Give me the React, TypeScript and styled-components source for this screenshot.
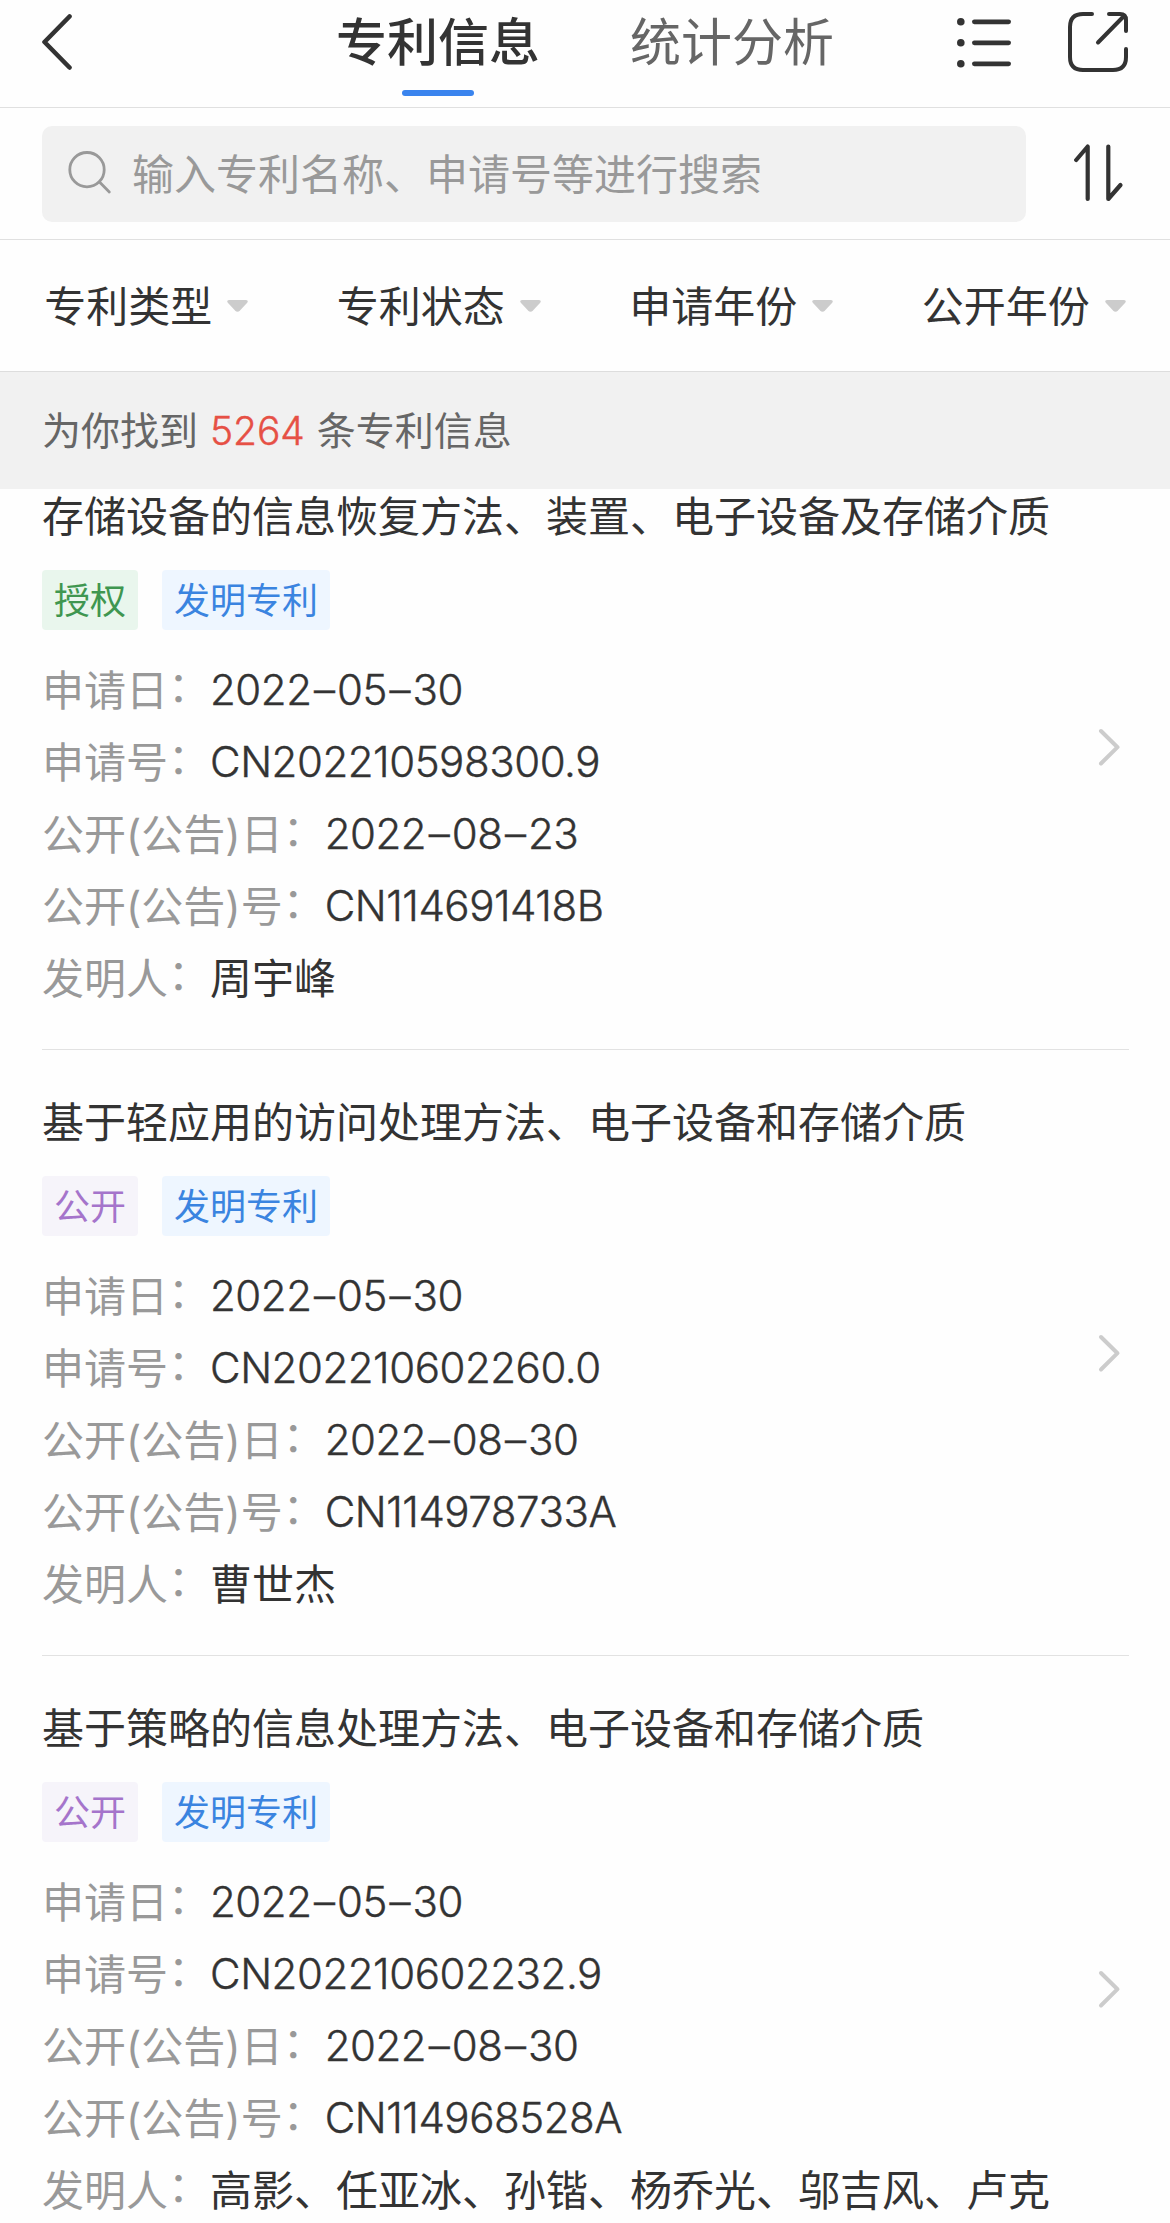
import React from 'react';
import styled, { createGlobalStyle } from 'styled-components';

const GlobalStyle = createGlobalStyle`
  * { box-sizing: border-box; }
  body {
    margin: 0;
    background: #fefefe;
    color: #333;
    font-family: Inter, "Noto Sans CJK SC", sans-serif;
  }
`;

const Screen = styled.div`
  width: 1170px;
  height: 2223px;
  overflow: hidden;
  display: flex;
  flex-direction: column;
  background: #fefefe;
`;

const Header = styled.header`
  flex: none;
  height: 108px;
  padding: 0 42px;
  display: flex;
  align-items: flex-start;
  border-bottom: 1px solid #e0e0e0;
`;

const BackIcon = styled.svg`
  width: 32px;
  height: 60px;
  margin: 12px 262px 0 0;
`;

const Tabs = styled.nav`
  display: flex;
  gap: 90px;
`;

const Tab = styled.div<{ $active?: boolean }>`
  height: 96px;
  display: flex;
  flex-direction: column;
  align-items: center;
  justify-content: space-between;
  font-size: 51px;
  line-height: 86px;
  font-weight: ${(p) => (p.$active ? 500 : 400)};
  color: ${(p) => (p.$active ? '#333' : '#666')};
`;

const TabBar = styled.span`
  width: 72px;
  height: 6px;
  border-radius: 3px;
  background: #3a84ee;
`;

const HeaderActions = styled.div`
  margin: 12px -2px 0 auto;
  display: flex;
  gap: 55px;
`;

const SearchBar = styled.div`
  flex: none;
  height: 132px;
  padding: 1px 46px 0 42px;
  display: flex;
  align-items: center;
  justify-content: space-between;
  border-bottom: 1px solid #e0e0e0;
`;

const SearchField = styled.div`
  width: 984px;
  height: 96px;
  padding-left: 26px;
  display: flex;
  align-items: center;
  gap: 20px;
  border-radius: 10px;
  background: #f1f1f1;
  color: #999;
  font-size: 42px;
  line-height: 60px;
`;

const Placeholder = styled.span`
  padding-top: 2px;
`;

const Filters = styled.div`
  flex: none;
  height: 132px;
  display: grid;
  grid-template-columns: repeat(4, 1fr);
  border-bottom: 1px solid #ddd;
`;

const Filter = styled.div`
  display: flex;
  align-items: center;
  justify-content: center;
  gap: 15px;
  font-size: 42px;
  line-height: 60px;
`;

const FilterName = styled.span`
  padding-top: 3px;
`;

const Summary = styled.div`
  flex: none;
  height: 117px;
  padding-left: 42px;
  font-size: 39px;
  line-height: 117px;
  color: #666;
  background: #f1f1f1;
`;

const Count = styled.span`
  margin: 0 12px;
  color: #e65045;
  font-weight: 300;
  -webkit-text-stroke: 0.4px #e65045;
  letter-spacing: -0.1px;
`;

const Viewport = styled.main`
  flex: 1;
  min-height: 0;
  overflow: hidden;
`;

const List = styled.div`
  margin: -45px 41px 0 42px;
`;

const Card = styled.article`
  padding: 42px 7px 41px 0;
  display: flex;
  align-items: center;
  justify-content: space-between;
  border-bottom: 1px solid #e2e2e2;
`;

const CardBody = styled.div`
  width: 1030px;
`;

const Title = styled.h2`
  margin: 0 0 23px;
  padding-top: 1px;
  font-size: 42px;
  font-weight: 400;
  line-height: 60px;
`;

const Tags = styled.div`
  display: flex;
  gap: 24px;
  margin-bottom: 30px;
`;

const tones = {
  green: { ink: '#3f9650', fill: '#e9f6ed' },
  purple: { ink: '#a574cb', fill: '#f6f4fa' },
  blue: { ink: '#3a84e0', fill: '#eef6ff' },
};

const Tag = styled.span<{ $tone: keyof typeof tones }>`
  height: 60px;
  padding: 0 12px;
  border-radius: 4px;
  font-size: 36px;
  line-height: 62px;
  color: ${(p) => tones[p.$tone].ink};
  background: ${(p) => tones[p.$tone].fill};
`;

const Fields = styled.dl`
  margin: 0;
  display: flex;
  flex-direction: column;
  gap: 12px;
`;

const Field = styled.div<{ $lines: number }>`
  display: flex;
  height: ${(p) => p.$lines * 60}px;
  font-size: 42px;
  line-height: 60px;
`;

const Label = styled.dt`
  flex: none;
  padding-top: 1px;
  color: #999;
`;

const Colon = styled.span`
  line-height: 0;
  vertical-align: 4px;
`;

const Value = styled.dd<{ $latin: boolean }>`
  margin: 0;
  padding-top: ${(p) => (p.$latin ? 0 : 1)}px;
  font-weight: ${(p) => (p.$latin ? 300 : 400)};
  -webkit-text-stroke: ${(p) => (p.$latin ? '0.4px #333' : '0')};
  letter-spacing: ${(p) => (p.$latin ? '-0.45px' : 'normal')};
`;

const Dash = styled.span`
  margin: 0 2.5px;
`;

const ListIcon = () => (
  <svg width="56" height="60" viewBox="0 0 56 60" fill="#333">
    {[9.7, 30.7, 51.7].map((y) => (
      <g key={y}>
        <circle cx="3.800" cy={y} r="3.8" />
        <rect x="15" y={y - 2.3} width="39" height="4.800" rx="2.400" />
      </g>
    ))}
  </svg>
);

const ShareIcon = () => (
  <svg width="62" height="62" viewBox="0 0 62 62" fill="none" stroke="#333" strokeWidth="4" strokeLinecap="round" strokeLinejoin="round">
    <path d="M24 2H15Q2 2 2 15V45Q2 58 15 58H45Q58 58 58 45V37" />
    <path d="M41 2H52Q58 2 58 8V19M56 4L30 30.500" />
  </svg>
);

const SearchIcon = () => (
  <svg width="44" height="46" viewBox="0 0 44 46" fill="none" stroke="#999" strokeWidth="2.8" strokeLinecap="round">
    <circle cx="19" cy="18.700" r="17.200" />
    <path d="M31.500 31L41.300 41" />
  </svg>
);

const SortIcon = () => (
  <svg width="50" height="60" viewBox="0 0 50 60" fill="none" stroke="#333" strokeWidth="4.200" strokeLinecap="round" strokeLinejoin="round">
    <path d="M2.200 16L13.700 2.500V55" />
    <path d="M34.300 2.500V55L46.500 41" />
  </svg>
);

const Caret = () => (
  <svg width="21" height="12" viewBox="0 0 21 12">
    <path d="M2 0H19Q22 .5 20 3L13 10.500Q10.500 13 8 10.500L1 3Q-1 .5 2 0Z" fill="#ccc" />
  </svg>
);

const Chevron = () => (
  <svg width="24" height="42" viewBox="0 0 24 42" fill="none" stroke="#ccc" strokeWidth="4" strokeLinecap="round" strokeLinejoin="round">
    <path d="M3 5L19.500 21.200L3 37.500" />
  </svg>
);

type Patent = {
  title: string;
  status: string;
  tone: 'green' | 'purple';
  fields: [string, string, number?][];
};

const patents: Patent[] = [
  {
    title: '存储设备的信息恢复方法、装置、电子设备及存储介质',
    status: '授权',
    tone: 'green',
    fields: [
      ['申请日', '2022–05–30'],
      ['申请号', 'CN202210598300.9'],
      ['公开(公告)日', '2022–08–23'],
      ['公开(公告)号', 'CN114691418B'],
      ['发明人', '周宇峰'],
    ],
  },
  {
    title: '基于轻应用的访问处理方法、电子设备和存储介质',
    status: '公开',
    tone: 'purple',
    fields: [
      ['申请日', '2022–05–30'],
      ['申请号', 'CN202210602260.0'],
      ['公开(公告)日', '2022–08–30'],
      ['公开(公告)号', 'CN114978733A'],
      ['发明人', '曹世杰'],
    ],
  },
  {
    title: '基于策略的信息处理方法、电子设备和存储介质',
    status: '公开',
    tone: 'purple',
    fields: [
      ['申请日', '2022–05–30'],
      ['申请号', 'CN202210602232.9'],
      ['公开(公告)日', '2022–08–30'],
      ['公开(公告)号', 'CN114968528A'],
      ['发明人', '高影、任亚冰、孙锴、杨乔光、邬吉风、卢克', 2],
    ],
  },
];

const spaceDashes = (text: string) =>
  text.split('–').map((part, i) => (
    <React.Fragment key={i}>
      {i > 0 && <Dash>–</Dash>}
      {part}
    </React.Fragment>
  ));

export default function App() {
  return (
    <Screen lang="zh-CN">
      <GlobalStyle />
      <Header>
        <BackIcon viewBox="0 0 32 60" fill="none" stroke="#333" strokeWidth="4.600" strokeLinecap="round" strokeLinejoin="round">
          <path d="M27.500 4.500L2.500 30L27.500 55.500" />
        </BackIcon>
        <Tabs>
          <Tab $active>
            专利信息
            <TabBar />
          </Tab>
          <Tab>统计分析</Tab>
        </Tabs>
        <HeaderActions>
          <ListIcon />
          <ShareIcon />
        </HeaderActions>
      </Header>
      <SearchBar>
        <SearchField>
          <SearchIcon />
          <Placeholder>输入专利名称、申请号等进行搜索</Placeholder>
        </SearchField>
        <SortIcon />
      </SearchBar>
      <Filters>
        {['专利类型', '专利状态', '申请年份', '公开年份'].map((name) => (
          <Filter key={name}>
            <FilterName>{name}</FilterName>
            <Caret />
          </Filter>
        ))}
      </Filters>
      <Summary>
        为你找到<Count>5264</Count>条专利信息
      </Summary>
      <Viewport>
        <List>
          {patents.map((patent) => (
            <Card key={patent.title}>
              <CardBody>
                <Title>{patent.title}</Title>
                <Tags>
                  <Tag $tone={patent.tone}>{patent.status}</Tag>
                  <Tag $tone="blue">发明专利</Tag>
                </Tags>
                <Fields>
                  {patent.fields.map(([label, value, lines = 1]) => (
                    <Field key={label} $lines={lines}>
                      <Label>
                        {label}
                        <Colon>：</Colon>
                      </Label>
                      <Value $latin={/^[\x20-\x7e–]+$/.test(value)}>{spaceDashes(value)}</Value>
                    </Field>
                  ))}
                </Fields>
              </CardBody>
              <Chevron />
            </Card>
          ))}
        </List>
      </Viewport>
    </Screen>
  );
}
